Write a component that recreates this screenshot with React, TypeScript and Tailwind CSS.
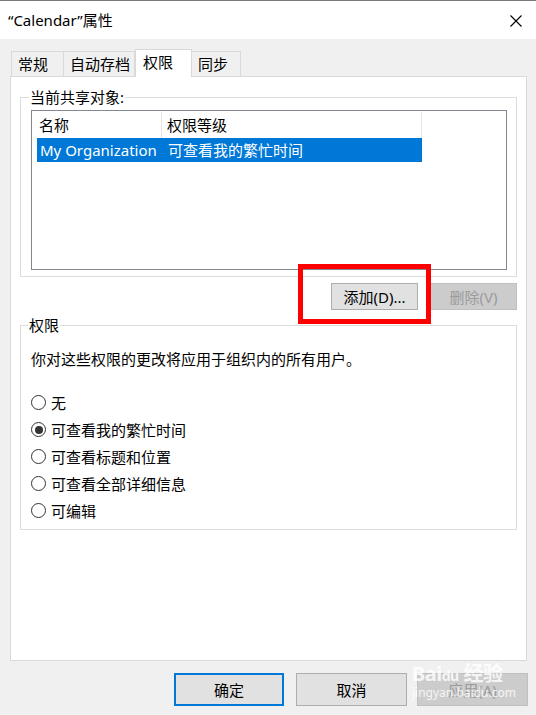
import { useState } from "react";

const FONT = { fontFamily: '"Noto Sans", "Noto Sans CJK SC", sans-serif' };

const TABS = ["常规", "自动存档", "权限", "同步"];

const LEVELS = [
  "无",
  "可查看我的繁忙时间",
  "可查看标题和位置",
  "可查看全部详细信息",
  "可编辑",
];

function Radio({ checked, label, onClick }: { checked: boolean; label: string; onClick: () => void }) {
  return (
    <div className="h-[27px] flex items-center cursor-default" onClick={onClick}>
      <span className="w-[15px] h-[15px] rounded-full border border-[#333333] bg-white flex items-center justify-center">
        {checked && <span className="w-[8px] h-[8px] rounded-full bg-[#333333]" />}
      </span>
      <span className="ml-[5px] text-[15px] leading-[20px] text-black">{label}</span>
    </div>
  );
}

export default function App() {
  const [level, setLevel] = useState(1);
  const [tab, setTab] = useState(2);

  return (
    <div className="w-[536px] h-[715px] bg-[#f0f0f0] relative overflow-hidden select-none" style={FONT}>
      <div className="h-px bg-[#7a7a7a]" />
      {/* title bar */}
      <div className="h-[38px] bg-white flex items-center justify-between pl-[8px] pr-[14px]">
        <span className="text-[15px] leading-[20px] text-black">“Calendar”属性</span>
        <svg width="12" height="12" viewBox="0 0 12 12" className="mt-[1px]">
          <path d="M0.5 0.5 L11.5 11.5 M11.5 0.5 L0.5 11.5" stroke="#000" strokeWidth="1.1" />
        </svg>
      </div>

      {/* tabs */}
      <div className="mt-[10px] h-[27px] flex items-end pl-[11px]">
        {TABS.map((t, i) => {
          const active = i === tab;
          const widths = ["w-[53px]", "w-[72px]", "w-[57px]", "w-[50px]"];
          return (
            <div
              key={t}
              onClick={() => setTab(i)}
              className={
                active
                  ? `${widths[i]} h-[28px] -mb-px relative z-10 bg-white border border-b-0 border-[#d9d9d9] pl-[7px] pt-[2px] text-[15px] leading-[20px] text-black`
                  : `${widths[i]} h-[25px] bg-[#f0f0f0] border border-b-0 border-[#d9d9d9] -ml-px first:ml-0 pl-[6px] pt-[2px] text-[15px] leading-[20px] text-black`
              }
            >
              {t}
            </div>
          );
        })}
      </div>

      {/* tab panel */}
      <div className="ml-[10px] w-[517px] h-[585px] bg-white border border-[#d9d9d9] px-[9px] pt-[20px]">
        {/* shared objects group */}
        <div className="relative h-[180px] border border-[#dcdcdc] pl-[10px] pt-[12px]">
          <span className="absolute left-[8px] -top-[11px] bg-white px-[1px] text-[15px] leading-[20px] text-black">
            当前共享对象:
          </span>
          <div className="w-[476px] h-[160px] border border-[#828790] bg-white">
            <div className="h-[27px] flex text-[15px] leading-[20px] text-black">
              <div className="w-[130px] h-[26px] mt-px border-r border-[#e5e5e5] pl-[7px] flex items-center">名称</div>
              <div className="w-[260px] h-[26px] mt-px border-r border-[#e5e5e5] pl-[5px] flex items-center">权限等级</div>
            </div>
            <div className="ml-[5px] w-[385px] h-[24px] bg-[#0078d7] flex items-center text-white text-[15px] leading-[20px]">
              <span className="w-[125px] pl-[3px] whitespace-nowrap">My Organization</span>
              <span className="pl-[6px] whitespace-nowrap">可查看我的繁忙时间</span>
            </div>
          </div>
        </div>

        {/* add / remove buttons */}
        <div className="mt-[6px] flex justify-end gap-[12px]">
          <div className="w-[87px] h-[27px] bg-[#e1e1e1] border border-[#adadad] flex items-center justify-center text-[15px] leading-[20px] text-black">
            添加(D)...
          </div>
          <div className="w-[87px] h-[27px] bg-[#cccccc] border border-[#bfbfbf] flex items-center justify-center text-[15px] leading-[20px] text-[#9b9b9b]">
            删除(V)
          </div>
        </div>

        {/* permission group */}
        <div className="relative mt-[15px] h-[205px] border border-[#dcdcdc] pl-[10px] pt-[23px]">
          <span className="absolute left-[7px] -top-[11px] bg-white px-[1px] text-[15px] leading-[20px] text-black">
            权限
          </span>
          <div className="text-[15px] leading-[20px] text-black">你对这些权限的更改将应用于组织内的所有用户。</div>
          <div className="mt-[20px]">
            {LEVELS.map((l, i) => (
              <Radio key={l} label={l} checked={level === i} onClick={() => setLevel(i)} />
            ))}
          </div>
        </div>
      </div>

      {/* dialog buttons */}
      <div className="mt-[12px] flex justify-end pr-[8px]">
        <div className="w-[110px] h-[33px] bg-[#e1e1e1] border-2 border-[#0078d7] flex items-center justify-center text-[15px] leading-[20px] text-black">
          确定
        </div>
        <div className="ml-[12px] w-[111px] h-[33px] bg-[#e1e1e1] border border-[#adadad] flex items-center justify-center text-[15px] leading-[20px] text-black">
          取消
        </div>
        <div className="ml-[10px] w-[111px] h-[33px] bg-[#cccccc] border border-[#bfbfbf] flex items-center justify-center text-[15px] leading-[20px] text-[#9b9b9b]">
          应用(A)
        </div>
      </div>

      {/* highlight frame */}
      <div className="absolute left-[298px] top-[264px] w-[133px] h-[60px] border-[5px] border-[#ff0000] pointer-events-none" />

      {/* watermark */}
      <div className="absolute left-[412px] top-[664px] pointer-events-none text-white/80 leading-none">
        <div className="text-[20px] font-bold tracking-tight">Bai<span className="text-[14px]">du</span> 经验</div>
        <div className="text-[12px] mt-[3px]">jingyan.baidu.com</div>
      </div>
    </div>
  );
}
